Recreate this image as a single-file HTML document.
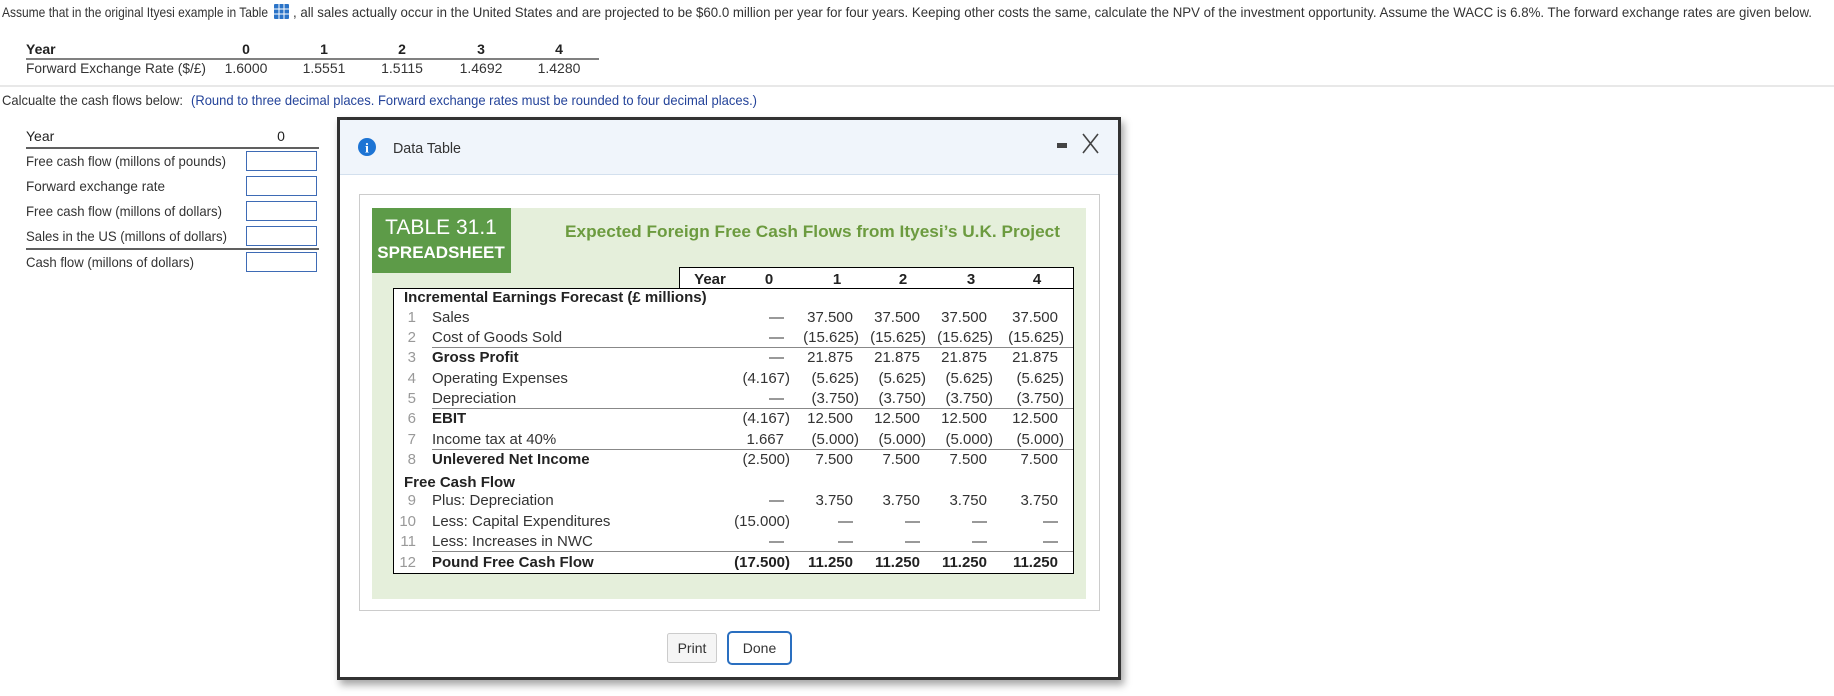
<!DOCTYPE html>
<html><head><meta charset="utf-8"><style>
html,body{margin:0;padding:0;background:#fff;width:1834px;height:696px;overflow:hidden}
svg{display:block}
text{font-family:"Liberation Sans Narrow","Liberation Sans",sans-serif;fill:#333}
.b{font-weight:bold}
.n text,text.n{fill:#999}
.k,.k text{fill:#222}
</style></head><body>
<svg width="1834" height="696" viewBox="0 0 1834 696" xmlns="http://www.w3.org/2000/svg">
<defs><filter id="sh" x="-5%" y="-5%" width="115%" height="115%"><feDropShadow dx="3" dy="5" stdDeviation="4" flood-color="#000" flood-opacity="0.35"/></filter></defs>
<text x="2" y="17" font-size="14" textLength="266" lengthAdjust="spacingAndGlyphs">Assume that in the original Ityesi example in Table</text>
<g transform="translate(274,4)"><rect x="0" y="0" width="15" height="15" fill="#2b74c8" rx="1"/><g stroke="#fff" stroke-width="1"><line x1="0" y1="5" x2="15" y2="5"/><line x1="0" y1="10" x2="15" y2="10"/><line x1="5" y1="0" x2="5" y2="15"/><line x1="10" y1="0" x2="10" y2="15"/></g></g>
<text x="293" y="17" font-size="14" textLength="1519" lengthAdjust="spacingAndGlyphs">, all sales actually occur in the United States and are projected to be  $60.0 million per year for four years. Keeping other costs the same, calculate the NPV of the investment opportunity. Assume the WACC is 6.8%. The forward exchange rates are given below.</text>
<g font-size="14">
<text x="26" y="54" class="b k">Year</text>
<g text-anchor="middle" class="b"><text x="246" y="54" class="k">0</text><text x="324" y="54" class="k">1</text><text x="402" y="54" class="k">2</text><text x="481" y="54" class="k">3</text><text x="559" y="54" class="k">4</text></g>
<line x1="26" y1="59" x2="599" y2="59" stroke="#000"/>
<text x="26" y="73" textLength="180" lengthAdjust="spacingAndGlyphs">Forward Exchange Rate ($/£)</text>
<g text-anchor="middle"><text x="246" y="73">1.6000</text><text x="324" y="73">1.5551</text><text x="402" y="73">1.5115</text><text x="481" y="73">1.4692</text><text x="559" y="73">1.4280</text></g>
</g>
<line x1="0" y1="86" x2="1834" y2="86" stroke="#d0d0d0"/>
<text x="2" y="105" font-size="14" textLength="181" lengthAdjust="spacingAndGlyphs">Calcualte the cash flows below:</text>
<text x="191" y="105" font-size="14" style="fill:#25449a" textLength="566" lengthAdjust="spacingAndGlyphs">(Round to three decimal places. Forward exchange rates must be rounded to four decimal places.)</text>
<g font-size="14">
<text x="26" y="141" class="k">Year</text><text x="281" y="141" text-anchor="middle" class="k">0</text>
<line x1="26" y1="148" x2="319" y2="148" stroke="#000" stroke-width="1.3"/>
<text x="26" y="166" textLength="200" lengthAdjust="spacingAndGlyphs">Free cash flow (millons of pounds)</text>
<text x="26" y="191" textLength="139" lengthAdjust="spacingAndGlyphs">Forward exchange rate</text>
<text x="26" y="216" textLength="196" lengthAdjust="spacingAndGlyphs">Free cash flow (millons of dollars)</text>
<text x="26" y="241" textLength="201" lengthAdjust="spacingAndGlyphs">Sales in the US (millons of dollars)</text>
<line x1="26" y1="249" x2="319" y2="249" stroke="#000" stroke-width="1.3"/>
<text x="26" y="267" textLength="168" lengthAdjust="spacingAndGlyphs">Cash flow (millons of dollars)</text>
<g fill="#fff" stroke="#3e6bb5"><rect x="246.5" y="151.5" width="70" height="19"/><rect x="246.5" y="176.5" width="70" height="19"/><rect x="246.5" y="201.5" width="70" height="19"/><rect x="246.5" y="226.5" width="70" height="19"/><rect x="246.5" y="252.5" width="70" height="19"/></g>
</g>
<rect x="338.5" y="118.5" width="781" height="560" fill="#fff" stroke="#333" stroke-width="3" filter="url(#sh)"/>
<rect x="340" y="120" width="778" height="54" fill="#f0f5fb"/>
<line x1="340" y1="174.5" x2="1118" y2="174.5" stroke="#d3e0ee"/>
<circle cx="367" cy="147" r="9" fill="#1d74d4"/>
<text x="367" y="152.5" font-size="14" text-anchor="middle" class="b" style="fill:#fff;font-family:'Liberation Serif',serif">i</text>
<text x="393" y="153" font-size="15" textLength="68" lengthAdjust="spacingAndGlyphs">Data Table</text>
<rect x="1057" y="143" width="10" height="5" fill="#444"/>
<g stroke="#444" stroke-width="1.6"><line x1="1083" y1="134" x2="1098" y2="153"/><line x1="1098" y1="134" x2="1083" y2="153"/></g>
<rect x="359.5" y="194.5" width="740" height="416" fill="#fff" stroke="#ccc"/>
<rect x="372" y="208" width="714" height="391" fill="#e5efdb"/>
<rect x="372" y="208" width="139" height="65" fill="#5d9b48"/>
<text x="441" y="234" font-size="21" text-anchor="middle" style="fill:#fff">TABLE 31.1</text>
<text x="441" y="258" font-size="17" text-anchor="middle" class="b" style="fill:#fff">SPREADSHEET</text>
<text x="565" y="237" font-size="17" class="b" style="fill:#6c9b3f" textLength="495" lengthAdjust="spacingAndGlyphs">Expected Foreign Free Cash Flows from Ityesi’s U.K. Project</text>
<rect x="679.5" y="267.5" width="394" height="21" fill="#fff" stroke="#000"/>
<rect x="393.5" y="288.5" width="680" height="285" fill="#fff" stroke="#000"/>
<g font-size="15" class="b k" text-anchor="middle">
<text x="710" y="284">Year</text><text x="769" y="284">0</text><text x="837" y="284">1</text><text x="903" y="284">2</text><text x="971" y="284">3</text><text x="1037" y="284">4</text>
</g>
<g font-size="15">
<text x="404" y="302" class="b k">Incremental Earnings Forecast (£ millions)</text>
<text x="404" y="487" class="b k">Free Cash Flow</text>
<g text-anchor="end" class="n">
<text x="416" y="322">1</text><text x="416" y="342">2</text><text x="416" y="362">3</text><text x="416" y="383">4</text><text x="416" y="403">5</text><text x="416" y="423">6</text><text x="416" y="444">7</text><text x="416" y="464">8</text><text x="416" y="505">9</text><text x="416" y="526">10</text><text x="416" y="546">11</text><text x="416" y="567">12</text>
</g>
<text x="432" y="322">Sales</text>
<text x="432" y="342">Cost of Goods Sold</text>
<text x="432" y="362" class="b k">Gross Profit</text>
<text x="432" y="383">Operating Expenses</text>
<text x="432" y="403">Depreciation</text>
<text x="432" y="423" class="b k">EBIT</text>
<text x="432" y="444">Income tax at 40%</text>
<text x="432" y="464" class="b k">Unlevered Net Income</text>
<text x="432" y="505">Plus: Depreciation</text>
<text x="432" y="526">Less: Capital Expenditures</text>
<text x="432" y="546">Less: Increases in NWC</text>
<text x="432" y="567" class="b k">Pound Free Cash Flow</text>
<g stroke="#888"><line x1="432" y1="347.5" x2="1073" y2="347.5"/><line x1="432" y1="408.5" x2="1073" y2="408.5"/><line x1="432" y1="449.5" x2="1073" y2="449.5"/><line x1="432" y1="551.5" x2="1073" y2="551.5"/></g>
<g text-anchor="end">
<text x="784" y="322">—</text><text x="784" y="342">—</text><text x="784" y="362">—</text><text x="790" y="383">(4.167)</text><text x="784" y="403">—</text><text x="790" y="423">(4.167)</text><text x="784" y="444">1.667</text><text x="790" y="464">(2.500)</text><text x="784" y="505">—</text><text x="790" y="526">(15.000)</text><text x="784" y="546">—</text><text x="790" y="567" class="b k">(17.500)</text>
<text x="853" y="322">37.500</text><text x="859" y="342">(15.625)</text><text x="853" y="362">21.875</text><text x="859" y="383">(5.625)</text><text x="859" y="403">(3.750)</text><text x="853" y="423">12.500</text><text x="859" y="444">(5.000)</text><text x="853" y="464">7.500</text><text x="853" y="505">3.750</text><text x="853" y="526">—</text><text x="853" y="546">—</text><text x="853" y="567" class="b k">11.250</text>
<text x="920" y="322">37.500</text><text x="926" y="342">(15.625)</text><text x="920" y="362">21.875</text><text x="926" y="383">(5.625)</text><text x="926" y="403">(3.750)</text><text x="920" y="423">12.500</text><text x="926" y="444">(5.000)</text><text x="920" y="464">7.500</text><text x="920" y="505">3.750</text><text x="920" y="526">—</text><text x="920" y="546">—</text><text x="920" y="567" class="b k">11.250</text>
<text x="987" y="322">37.500</text><text x="993" y="342">(15.625)</text><text x="987" y="362">21.875</text><text x="993" y="383">(5.625)</text><text x="993" y="403">(3.750)</text><text x="987" y="423">12.500</text><text x="993" y="444">(5.000)</text><text x="987" y="464">7.500</text><text x="987" y="505">3.750</text><text x="987" y="526">—</text><text x="987" y="546">—</text><text x="987" y="567" class="b k">11.250</text>
<text x="1058" y="322">37.500</text><text x="1064" y="342">(15.625)</text><text x="1058" y="362">21.875</text><text x="1064" y="383">(5.625)</text><text x="1064" y="403">(3.750)</text><text x="1058" y="423">12.500</text><text x="1064" y="444">(5.000)</text><text x="1058" y="464">7.500</text><text x="1058" y="505">3.750</text><text x="1058" y="526">—</text><text x="1058" y="546">—</text><text x="1058" y="567" class="b k">11.250</text>
</g>
</g>
<rect x="667.5" y="633.5" width="49" height="29" fill="#f5f5f5" stroke="#ccc" rx="2"/>
<text x="692" y="653" font-size="14" text-anchor="middle">Print</text>
<rect x="728" y="632" width="63" height="32" fill="#fff" stroke="#2a6fc0" stroke-width="2" rx="4"/>
<text x="759.5" y="653" font-size="14" text-anchor="middle">Done</text>
</svg>
</body></html>
